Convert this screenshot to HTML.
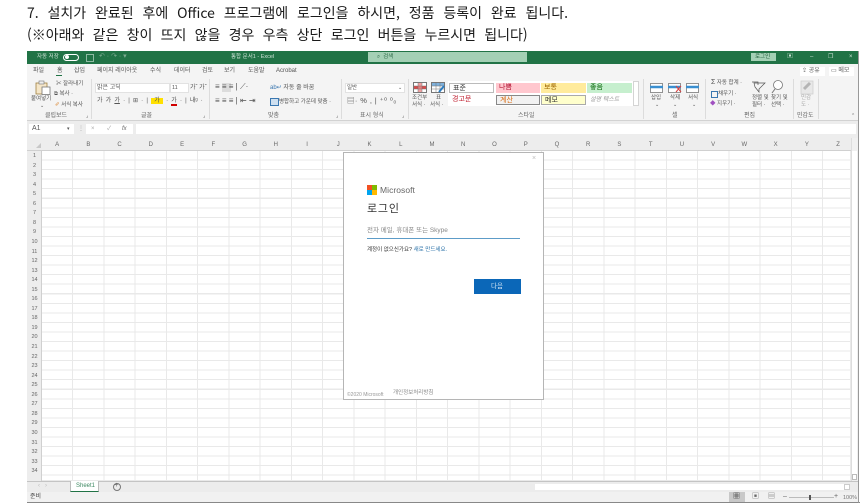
<!DOCTYPE html>
<html lang="ko"><head><meta charset="utf-8"><title>로그인</title>
<style>
html,body{margin:0;padding:0;background:#fff}
body{width:860px;height:503px;overflow:hidden;position:relative;font-family:"Liberation Sans","Noto Sans CJK KR",sans-serif}
#w{position:absolute;left:0;top:0;width:860px;height:503px;filter:blur(.35px)}
.a,.t{position:absolute}
.t{white-space:nowrap;font-size:6px;line-height:8px;color:#555}
.l{position:absolute;font-family:"Noto Sans CJK KR",sans-serif;font-size:14px;line-height:18px;color:#1a1a1a;white-space:nowrap;left:27px}
.g{position:absolute;width:1px;top:79px;height:40px;background:#dcdcdc}
.gl{top:112px;font-size:6px;color:#666;line-height:8px;position:absolute;white-space:nowrap}
.c{position:absolute;top:141px;width:31.24px;text-align:center;font-size:6px;line-height:8px;color:#666}
.r{position:absolute;left:27px;width:15px;text-align:center;font-size:5.5px;line-height:8px;color:#666}
.s{position:absolute;font-size:7px;line-height:10px;height:10px;padding-left:3px;box-sizing:border-box;white-space:nowrap}
svg{position:absolute}
</style></head><body><div id="w">
<div class="l" style="top:4px;word-spacing:4.93px">7. 설치가 완료된 후에 Office 프로그램에 로그인을 하시면, 정품 등록이 완료 됩니다.</div>
<div class="l" style="top:26px;word-spacing:4.33px">(※아래와 같은 창이 뜨지 않을 경우 우측 상단 로그인 버튼을 누르시면 됩니다)</div>

<div class="a" style="left:27px;top:51px;width:831px;height:13px;background:#217346"></div>
<div class="t" style="left:37px;top:53px;color:#cfe3d7;font-size:5.5px">자동 저장</div>
<div class="a" style="left:63px;top:54px;width:14px;height:5px;border:1px solid #fff;border-radius:5px"></div>
<div class="a" style="left:65px;top:55px;width:4px;height:4px;background:#fff;border-radius:50%"></div>
<div class="a" style="left:86px;top:54px;width:6px;height:6px;border:1px solid #8fbba3"></div>
<div class="t" style="left:99px;top:53px;color:#7eab92;font-size:7px">↶ · ↷ · ▾</div>
<div class="t" style="left:231px;top:53px;color:#cfe3d7;font-size:5.5px">통합 문서1 - Excel</div>
<div class="a" style="left:368px;top:52px;width:159px;height:10px;background:#a4d0b5"></div>
<div class="t" style="left:377px;top:53px;color:#2f6b49;font-size:5.5px">⌕ &nbsp;검색</div>
<div class="a" style="left:751px;top:53px;width:25px;height:8px;background:#a4d0b5"></div>
<div class="t" style="left:755px;top:53px;color:#1d5c39;font-size:5.5px">로그인</div>
<div class="t" style="left:787px;top:53px;color:#cfe3d7">▣</div>
<div class="t" style="left:810px;top:53px;color:#cfe3d7">–</div>
<div class="t" style="left:828px;top:53px;color:#cfe3d7">❐</div>
<div class="t" style="left:849px;top:53px;color:#cfe3d7">×</div>

<!-- Tabs -->
<div class="a" style="left:27px;top:64px;width:831px;height:57px;background:#f4f4f4"></div>
<div class="t" style="left:33px;top:67px">파일</div>
<div class="t" style="left:57px;top:67px">홈</div>
<div class="a" style="left:56px;top:75px;width:6px;height:1px;background:#217346"></div>
<div class="t" style="left:74px;top:67px">삽입</div>
<div class="t" style="left:97px;top:67px">페이지 레이아웃</div>
<div class="t" style="left:150px;top:67px">수식</div>
<div class="t" style="left:174px;top:67px">데이터</div>
<div class="t" style="left:202px;top:67px">검토</div>
<div class="t" style="left:224px;top:67px">보기</div>
<div class="t" style="left:248px;top:67px">도움말</div>
<div class="t" style="left:276px;top:67px">Acrobat</div>
<div class="a" style="left:800px;top:67px;width:25px;height:9px;background:#fff"></div>
<div class="t" style="left:802px;top:67px">⇪ 공유</div>
<div class="a" style="left:829px;top:67px;width:25px;height:9px;background:#fff"></div>
<div class="t" style="left:831px;top:67px">▭ 메모</div>

<!-- Clipboard -->
<svg style="left:35px;top:80px" width="16" height="15" viewBox="0 0 16 15"><rect x="1" y="3" width="11" height="11" fill="#f5e6c8" stroke="#a08040" stroke-width=".8"/><rect x="7" y="7" width="8" height="7.500" fill="#fff" stroke="#777" stroke-width=".8"/><rect x="4" y="1" width="5" height="3" fill="#eee" stroke="#777" stroke-width=".6"/></svg>
<div class="t" style="left:31px;top:95px;font-size:5.5px">붙여넣기</div>
<div class="t" style="left:40px;top:102px;font-size:5px">⌄</div>
<div class="t" style="left:56px;top:80px;font-size:5.5px">✂ 잘라내기</div>
<div class="t" style="left:54px;top:90px;font-size:5.5px">⧉ 복사 ·</div>
<div class="t" style="left:55px;top:101px;font-size:5.5px"><span style="color:#d9822b">✐</span> 서식 복사</div>
<div class="gl" style="left:45px">클립보드</div>
<div class="t" style="left:86px;top:112px;font-size:5px">⌟</div>
<div class="g" style="left:91px"></div>

<!-- Font -->
<div class="a" style="left:95px;top:83px;width:73px;height:8px;background:#fff;border:1px solid #e2e2e2"></div>
<div class="t" style="left:97px;top:84px">맑은 고딕</div>
<div class="a" style="left:170px;top:83px;width:17px;height:8px;background:#fff;border:1px solid #e2e2e2"></div>
<div class="t" style="left:172px;top:84px;font-size:5.5px">11</div>
<div class="t" style="left:190px;top:84px">가ˆ 가ˇ</div>
<div class="t" style="left:97px;top:97px;word-spacing:1.5px">가 가 <u>가</u> · | ⊞ · | <span style="background:#ffe000">&nbsp;가&nbsp;</span> · <span style="border-bottom:2px solid #d00000">가</span> · | 내ᵍ ·</div>
<div class="gl" style="left:141px">글꼴</div>
<div class="t" style="left:203px;top:112px;font-size:5px">⌟</div>
<div class="g" style="left:209px"></div>

<!-- Alignment -->
<div class="a" style="left:222px;top:83px;width:9px;height:9px;background:#dcdcdc"></div>
<div class="t" style="left:215px;top:83px;font-size:8px">≡ ≡ ≡ | ⟋·</div>
<div class="t" style="left:215px;top:97px;font-size:8px">≡ ≡ ≡ | ⇤ ⇥</div>
<div class="t" style="left:270px;top:84px"><span style="color:#3a77b0">ab↵</span> 자동 줄 바꿈</div>
<div class="a" style="left:270px;top:98px;width:7px;height:6px;border:1px solid #3a77b0;background:#cfe0f0"></div>
<div class="t" style="left:279px;top:98px;font-size:5.5px">병합하고 가운데 맞춤 ·</div>
<div class="gl" style="left:268px">맞춤</div>
<div class="t" style="left:336px;top:112px;font-size:5px">⌟</div>
<div class="g" style="left:341px"></div>

<!-- Number -->
<div class="a" style="left:345px;top:83px;width:58px;height:8px;background:#fff;border:1px solid #e2e2e2"></div>
<div class="t" style="left:347px;top:84px;font-size:5.5px">일반</div>
<div class="t" style="left:398px;top:84px;font-size:5px">⌄</div>
<div class="t" style="left:347px;top:97px;font-size:7.5px;letter-spacing:.4px">▤· % , | ⁺⁰ ⁰₀</div>
<div class="gl" style="left:360px">표시 형식</div>
<div class="t" style="left:402px;top:112px;font-size:5px">⌟</div>
<div class="g" style="left:408px"></div>

<!-- Styles -->
<svg style="left:413px;top:82px" width="14" height="11" viewBox="0 0 14 11"><rect x=".5" y=".5" width="13" height="10" fill="#fff" stroke="#777"/><rect x="1" y="4" width="12" height="3" fill="#d84a4a"/><rect x="5" y="1" width="4" height="9" fill="#e88" opacity=".8"/><path d="M5 0v11M9 0v11M0 4h14M0 7h14" stroke="#777" stroke-width=".5"/></svg>
<svg style="left:431px;top:82px" width="14" height="11" viewBox="0 0 14 11"><rect x=".5" y=".5" width="13" height="10" fill="#fff" stroke="#777"/><rect x="1" y="1" width="12" height="3" fill="#7fb1dc"/><path d="M5 0v11M9 0v11M0 4h14M0 7h14" stroke="#777" stroke-width=".5"/><path d="M8 10l5-6" stroke="#2b7cc0" stroke-width="2"/></svg>
<div class="t" style="left:412px;top:94px;font-size:5.5px">조건부</div>
<div class="t" style="left:412px;top:101px;font-size:5.5px">서식 ·</div>
<div class="t" style="left:436px;top:94px;font-size:5.5px">표</div>
<div class="t" style="left:430px;top:101px;font-size:5.5px">서식 ·</div>
<div class="a" style="left:448px;top:81px;width:185px;height:25px;background:#fff"></div>
<div class="s" style="left:449px;top:83px;width:45px;background:#fff;border:1px solid #bbb;color:#333">표준</div>
<div class="s" style="left:496px;top:83px;width:44px;background:#ffc7ce;color:#b01030">나쁨</div>
<div class="s" style="left:541px;top:83px;width:45px;background:#ffeb9c;color:#9c6500">보통</div>
<div class="s" style="left:587px;top:83px;width:45px;background:#c6efce;color:#006100">좋음</div>
<div class="s" style="left:449px;top:95px;width:45px;color:#c02030">경고문</div>
<div class="s" style="left:496px;top:95px;width:44px;background:#f2f2f2;border:1px solid #888;color:#d96a10">계산</div>
<div class="s" style="left:541px;top:95px;width:45px;background:#ffffcc;border:1px solid #aaa;color:#333">메모</div>
<div class="s" style="left:587px;top:95px;width:45px;color:#999;font-style:italic;font-size:6px">설명 텍스트</div>
<div class="a" style="left:633px;top:81px;width:6px;height:25px;background:#fff;border:1px solid #d4d4d4;box-sizing:border-box"></div>
<div class="gl" style="left:518px">스타일</div>
<div class="g" style="left:643px"></div>

<!-- Cells -->
<svg style="left:650px;top:83px" width="60" height="11" viewBox="0 0 60 11"><g fill="#fff" stroke="#666" stroke-width=".7"><rect x=".5" y=".5" width="12" height="9"/><rect x="18.500" y=".5" width="12" height="9"/><rect x="36.500" y=".5" width="12" height="9"/></g><path d="M0 4h13M18 4h13M36 4h13" stroke="#3a8fd0" stroke-width="2.500"/><path d="M26 3l5 6M31 3l-5 6" stroke="#d94040"/></svg>
<div class="t" style="left:651px;top:94px;font-size:5.5px">삽입</div>
<div class="t" style="left:670px;top:94px;font-size:5.5px">삭제</div>
<div class="t" style="left:688px;top:94px;font-size:5.5px">서식</div>
<div class="t" style="left:655px;top:101px;font-size:5px">⌄</div>
<div class="t" style="left:673px;top:101px;font-size:5px">⌄</div>
<div class="t" style="left:692px;top:101px;font-size:5px">⌄</div>
<div class="gl" style="left:672px">셀</div>
<div class="g" style="left:705px"></div>

<!-- Editing -->
<div class="t" style="left:711px;top:79px;font-size:5.5px"><span style="font-size:7px">Σ</span> 자동 합계 ·</div>
<div class="a" style="left:711px;top:91px;width:5px;height:5px;border:1px solid #3a77b0"></div>
<div class="t" style="left:718px;top:90px;font-size:5.5px">채우기 ·</div>
<div class="t" style="left:710px;top:100px;font-size:5.5px"><span style="color:#a050c0">◆</span> 지우기 ·</div>
<svg style="left:751px;top:80px" width="36" height="14" viewBox="0 0 36 14"><path d="M1 2h6v3M4 7l4 5v-3l6-6H3z" fill="none" stroke="#555" stroke-width=".7"/><circle cx="27" cy="5" r="4.500" fill="#fff" stroke="#777" stroke-width=".8"/><path d="M24 9l-3 4" stroke="#777"/></svg>
<div class="t" style="left:752px;top:94px;font-size:5.5px">정렬 및</div>
<div class="t" style="left:752px;top:101px;font-size:5.5px">필터 ·</div>
<div class="t" style="left:771px;top:94px;font-size:5.5px">찾기 및</div>
<div class="t" style="left:771px;top:101px;font-size:5.5px">선택 ·</div>
<div class="gl" style="left:744px">편집</div>
<div class="g" style="left:793px"></div>

<!-- Sensitivity -->
<svg style="left:800px;top:80px" width="14" height="15" viewBox="0 0 14 15"><rect x="1" y="1" width="12" height="13" fill="#e8e8e8" stroke="#ccc" stroke-width=".7"/><path d="M4 9l6-6" stroke="#b5b5b5" stroke-width="3"/></svg>
<div class="t" style="left:801px;top:94px;font-size:5.5px;color:#aaa">민감</div>
<div class="t" style="left:801px;top:101px;font-size:5.5px;color:#aaa">도 ·</div>
<div class="gl" style="left:797px">민감도</div>
<div class="g" style="left:818px"></div>
<div class="t" style="left:851px;top:112px;font-size:5px">⌃</div>
<div class="a" style="left:27px;top:120px;width:831px;height:1px;background:#d2d2d2"></div>

<!-- Formula bar -->
<div class="a" style="left:27px;top:121px;width:831px;height:30px;background:#ededed"></div>
<div class="a" style="left:29px;top:124px;width:45px;height:10px;background:#fff"></div>
<div class="t" style="left:32px;top:125px;font-size:7px">A1</div>
<div class="t" style="left:67px;top:125px;font-size:5px">▾</div>
<div class="t" style="left:78px;top:125px;color:#aaa">⋮</div>
<div class="a" style="left:86px;top:124px;width:47px;height:10px;background:#fff"></div>
<div class="t" style="left:91px;top:125px;color:#aaa">×</div>
<div class="t" style="left:107px;top:125px;color:#aaa">✓</div>
<div class="t" style="left:122px;top:125px;color:#666"><i>fx</i></div>
<div class="a" style="left:136px;top:124px;width:720px;height:10px;background:#fff"></div>

<!-- Grid -->
<div class="a" style="left:42px;top:151px;width:809px;height:330px;background-color:#fff;background-image:repeating-linear-gradient(to right,#e9e9e9 0,#e9e9e9 1px,transparent 1px,transparent 31.24px),repeating-linear-gradient(to bottom,#e9e9e9 0,#e9e9e9 1px,transparent 1px,transparent 9.55px);background-position:-1px 0,0 -1px"></div>
<div class="a" style="left:27px;top:151px;width:15px;height:330px;background:#ededed;border-right:1px solid #d0d0d0;box-sizing:border-box"></div>
<div class="a" style="left:27px;top:150px;width:824px;height:1px;background:#d0d0d0"></div>
<div class="a" style="left:36px;top:143px;width:0;height:0;border-left:5px solid transparent;border-bottom:5px solid #c8c8c8"></div>

<div class="c" style="left:41.500px">A</div><div class="c" style="left:72.740px">B</div><div class="c" style="left:103.980px">C</div><div class="c" style="left:135.220px">D</div><div class="c" style="left:166.460px">E</div><div class="c" style="left:197.700px">F</div><div class="c" style="left:228.940px">G</div><div class="c" style="left:260.180px">H</div><div class="c" style="left:291.420px">I</div><div class="c" style="left:322.660px">J</div><div class="c" style="left:353.900px">K</div><div class="c" style="left:385.140px">L</div><div class="c" style="left:416.380px">M</div><div class="c" style="left:447.620px">N</div><div class="c" style="left:478.860px">O</div><div class="c" style="left:510.100px">P</div><div class="c" style="left:541.340px">Q</div><div class="c" style="left:572.580px">R</div><div class="c" style="left:603.820px">S</div><div class="c" style="left:635.060px">T</div><div class="c" style="left:666.300px">U</div><div class="c" style="left:697.540px">V</div><div class="c" style="left:728.780px">W</div><div class="c" style="left:760.020px">X</div><div class="c" style="left:791.260px">Y</div><div class="c" style="left:822.500px">Z</div>

<div class="r" style="top:152px">1</div><div class="r" style="top:161.550px">2</div><div class="r" style="top:171.100px">3</div><div class="r" style="top:180.650px">4</div><div class="r" style="top:190.200px">5</div><div class="r" style="top:199.750px">6</div><div class="r" style="top:209.300px">7</div><div class="r" style="top:218.850px">8</div><div class="r" style="top:228.400px">9</div><div class="r" style="top:237.950px">10</div><div class="r" style="top:247.500px">11</div><div class="r" style="top:257.050px">12</div><div class="r" style="top:266.600px">13</div><div class="r" style="top:276.150px">14</div><div class="r" style="top:285.700px">15</div><div class="r" style="top:295.250px">16</div><div class="r" style="top:304.800px">17</div><div class="r" style="top:314.350px">18</div><div class="r" style="top:323.900px">19</div><div class="r" style="top:333.450px">20</div><div class="r" style="top:343px">21</div><div class="r" style="top:352.550px">22</div><div class="r" style="top:362.100px">23</div><div class="r" style="top:371.650px">24</div><div class="r" style="top:381.200px">25</div><div class="r" style="top:390.750px">26</div><div class="r" style="top:400.300px">27</div><div class="r" style="top:409.850px">28</div><div class="r" style="top:419.400px">29</div><div class="r" style="top:428.950px">30</div><div class="r" style="top:438.500px">31</div><div class="r" style="top:448.050px">32</div><div class="r" style="top:457.600px">33</div><div class="r" style="top:467.150px">34</div>

<!-- Vertical scrollbar -->
<div class="a" style="left:851px;top:138px;width:7px;height:343px;background:#f0f0f0;border-left:1px solid #ddd;box-sizing:border-box"></div>
<div class="a" style="left:852px;top:151px;width:5px;height:323px;background:#fff"></div>
<div class="a" style="left:852px;top:474px;width:5px;height:6px;background:#fff;border:1px solid #bbb;box-sizing:border-box"></div>

<!-- Sheet bar -->
<div class="a" style="left:27px;top:481px;width:831px;height:11px;background:#ececec;border-top:1px solid #c4c4c4;box-sizing:border-box"></div>
<div class="t" style="left:38px;top:482px;color:#bbb">‹ &nbsp; ›</div>
<div class="a" style="left:70px;top:481px;width:29px;height:11px;background:#fff;border-left:1px solid #bbb;border-right:1px solid #bbb;border-bottom:1px solid #217346;box-sizing:border-box"></div>
<div class="t" style="left:76px;top:482px;color:#3f8a63;font-size:6px">Sheet1</div>
<div class="a" style="left:113px;top:483px;width:6px;height:6px;border:1px solid #777;border-radius:50%"></div>
<div class="t" style="left:114.200px;top:482px;font-size:7px;color:#666">+</div>
<div class="a" style="left:535px;top:484px;width:309px;height:6px;background:#fff"></div>
<div class="a" style="left:844px;top:484px;width:6px;height:6px;background:#fff;border:1px solid #ccc;box-sizing:border-box"></div>

<!-- Status bar -->
<div class="a" style="left:27px;top:492px;width:831px;height:10px;background:#f1f1f1"></div>
<div class="a" style="left:27px;top:502px;width:833px;height:1px;background:#888"></div>
<div class="a" style="left:858px;top:51px;width:1px;height:452px;background:#999"></div>
<div class="t" style="left:30px;top:493px;color:#444;font-size:6px">준비</div>
<div class="a" style="left:729px;top:492px;width:16px;height:10px;background:#c8c8c8"></div>
<div class="t" style="left:733px;top:493px;font-size:7px;color:#333">▦</div>
<div class="t" style="left:752px;top:493px;font-size:7px;color:#666">▣</div>
<div class="t" style="left:768px;top:493px;font-size:7px;color:#666">▤</div>
<div class="t" style="left:783px;top:493px;font-size:7px;color:#666">–</div>
<div class="a" style="left:789px;top:497px;width:45px;height:1px;background:#bbb"></div>
<div class="a" style="left:809px;top:495px;width:2px;height:5px;background:#555"></div>
<div class="t" style="left:834px;top:493px;font-size:7px;color:#666">+</div>
<div class="t" style="left:843px;top:494px;font-size:5.5px;color:#777">100%</div>

<!-- Dialog -->
<div class="a" style="left:343px;top:152px;width:201px;height:248px;background:#fff;border:1px solid #b5b5b5;box-sizing:border-box"></div>
<div class="t" style="left:532px;top:155px;color:#bbb;font-size:7px">×</div>
<div class="a" style="left:367px;top:185px;width:5px;height:5px;background:#f25022"></div>
<div class="a" style="left:372px;top:185px;width:5px;height:5px;background:#7fba00"></div>
<div class="a" style="left:367px;top:190px;width:5px;height:5px;background:#00a4ef"></div>
<div class="a" style="left:372px;top:190px;width:5px;height:5px;background:#ffb900"></div>
<div class="t" style="left:380px;top:185px;font-size:8.500px;line-height:10px;color:#666;letter-spacing:.05px">Microsoft</div>
<div class="t" style="left:367px;top:201px;font-size:11px;line-height:15px;color:#333;letter-spacing:.8px;font-family:'Noto Sans CJK KR',sans-serif">로그인</div>
<div class="t" style="left:367px;top:226.500px;font-size:6.500px;color:#888">전자 메일, 휴대폰 또는 Skype</div>
<div class="a" style="left:367px;top:238px;width:153px;height:1px;background:#5d9cc8"></div>
<div class="t" style="left:367px;top:246px;font-size:5.500px;color:#333">계정이 없으신가요? <span style="color:#2a72a8">새로 만드세요.</span></div>
<div class="a" style="left:473.500px;top:279px;width:47px;height:14.500px;background:#0b67b8"></div>
<div class="t" style="left:473.500px;top:282.500px;width:47px;text-align:center;color:#cfe2f3;font-size:6.500px">다음</div>
<div class="t" style="left:347px;top:391px;font-size:5px;color:#999">©2020 Microsoft</div>
<div class="t" style="left:393px;top:389px;font-size:5.500px;color:#888">개인정보처리방침</div>
</div></body></html>
